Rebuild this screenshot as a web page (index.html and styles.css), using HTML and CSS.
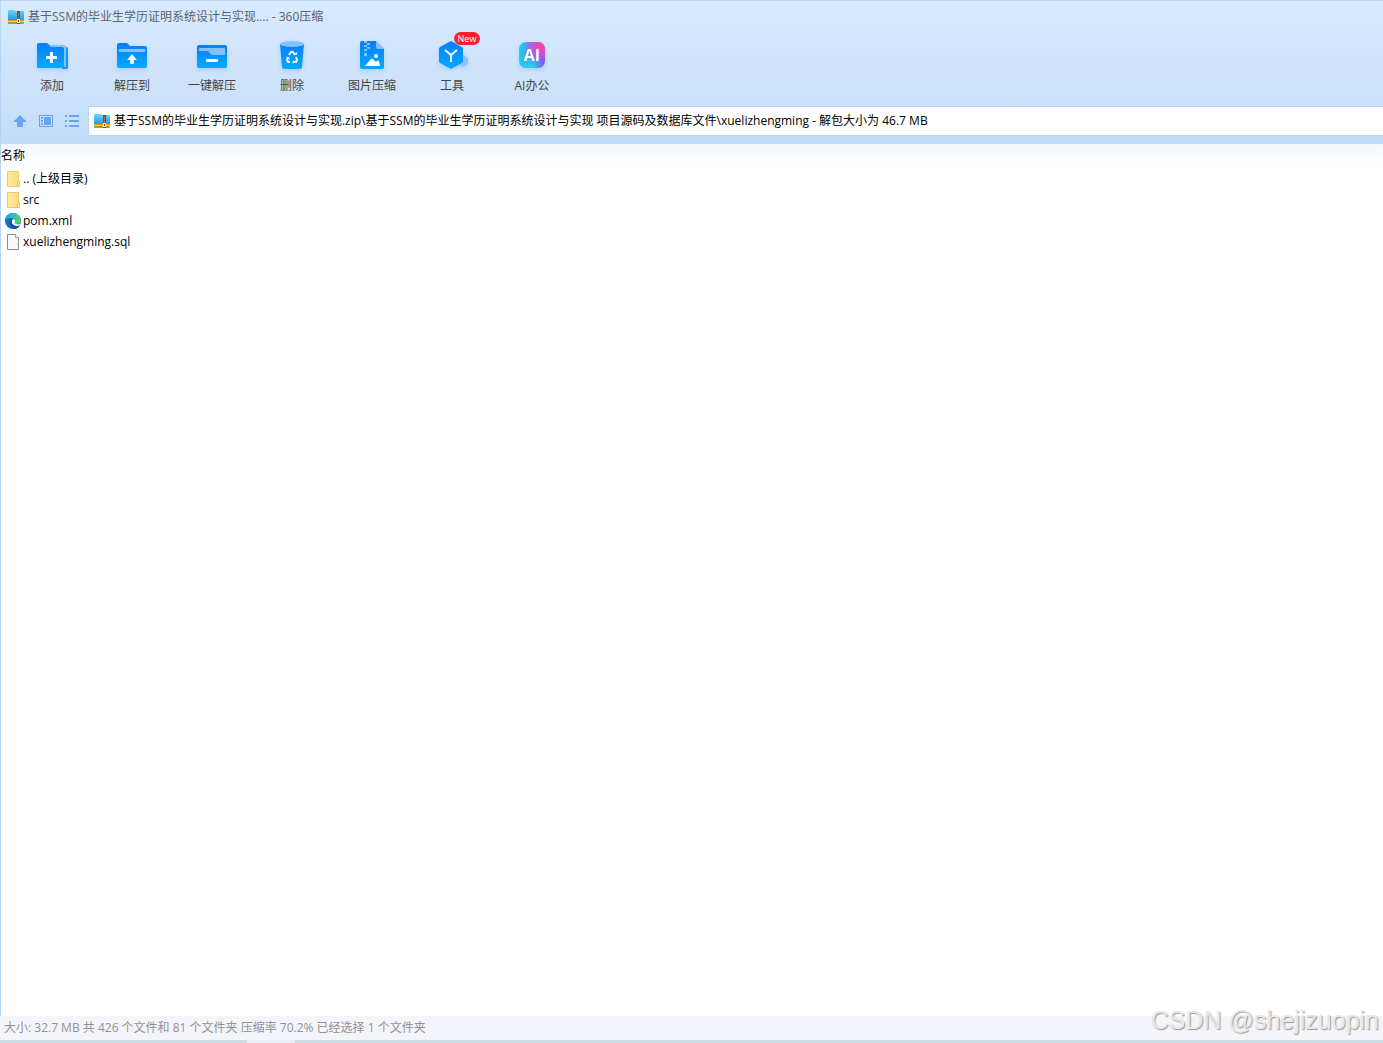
FILE: index.html
```
<!DOCTYPE html>
<html lang="zh-CN">
<head>
    <meta charset="UTF-8">
    <meta name="viewport" content="width=device-width, initial-scale=1.0">
    <title>360压缩</title>
    <link rel="stylesheet" href="styles.css">
</head>
<body>

    <!-- Shared icons and gradients -->
    <svg class="defs" width="0" height="0" aria-hidden="true">
        <defs>
            <linearGradient id="blue" x1="0" y1="0" x2="0" y2="1">
                <stop offset="0" stop-color="#087eff"/>
                <stop offset="1" stop-color="#00aaff"/>
            </linearGradient>
            <linearGradient id="zipBlue" x1="0" y1="0" x2="0" y2="1">
                <stop offset="0" stop-color="#69d5fb"/>
                <stop offset="1" stop-color="#2598ee"/>
            </linearGradient>
            <linearGradient id="folderYellow" x1="0" y1="0" x2="1" y2="0">
                <stop offset="0" stop-color="#ffe9a0"/>
                <stop offset="1" stop-color="#fbdc80"/>
            </linearGradient>
            <linearGradient id="edgeGreen" x1="0" y1="0" x2="1" y2="0">
                <stop offset="0" stop-color="#1f9fdc"/>
                <stop offset="0.5" stop-color="#2dbfc8"/>
                <stop offset="1" stop-color="#62d548"/>
            </linearGradient>
            <linearGradient id="aiBase" x1="0" y1="0" x2="1" y2="0">
                <stop offset="0" stop-color="#10d9ef"/>
                <stop offset="0.45" stop-color="#6a83f5"/>
                <stop offset="1" stop-color="#7a55f4"/>
            </linearGradient>
            <radialGradient id="aiPink" cx="0.85" cy="0.15" r="0.65">
                <stop offset="0" stop-color="#ff3f9e"/>
                <stop offset="0.5" stop-color="#e04bdc" stop-opacity="0.8"/>
                <stop offset="1" stop-color="#a45af0" stop-opacity="0"/>
            </radialGradient>
            <radialGradient id="aiCyan" cx="0.45" cy="1" r="0.55">
                <stop offset="0" stop-color="#19e0f0"/>
                <stop offset="1" stop-color="#20c4f4" stop-opacity="0"/>
            </radialGradient>
            <symbol id="zip" viewBox="0 0 16 14">
                <path d="M0 1q0-1 1-1h5l2 1h7q1 0 1 1v8H0z" fill="url(#zipBlue)"/>
                <path d="M0 10h16v2H0z" fill="#ff8f14"/>
                <path d="M0 11h16v1H0z" fill="#fbd045"/>
                <path d="M0 12h16v1q0 1-1 1H1q-1 0-1-1z" fill="#7fb52d"/>
                <path d="M9 1h3v13H9z" fill="#8f4a1c"/>
                <path d="M10 3h1v1h-1zM10 5h1v1h-1zM10 7h1v1h-1z" fill="#c98a4a"/>
                <path d="M9 9h3v4H9z" fill="#ffe9b0"/>
                <path d="M10 10h1v2h-1z" fill="#7c3a18"/>
            </symbol>
            <symbol id="folder" viewBox="0 0 16 16">
                <path d="M2.500.5h11v10h1v5h-12z" fill="url(#folderYellow)" stroke="#ebcb6c"/>
                <path d="M12.500 15.500v-4l1-1h1v5z" fill="#ffe9a0" stroke="#e6c460"/>
            </symbol>
        </defs>
    </svg>

    <div class="window">
        <header class="top">
            <div class="title-bar">
                <svg class="zip-icon"><use href="#zip"/></svg>
                <span>基于SSM的毕业生学历证明系统设计与实现.... - 360压缩</span>
            </div>

            <nav class="toolbar">
                <button class="tool" type="button">
                    <svg class="tool-icon" viewBox="0 0 32 32">
                        <path d="M28 7h2q2 0 2 2v19q0 1-1 1h-5z" fill="#1692ff"/>
                        <path d="M1 5q0-2 2-2h8l3 2h14q2 0 2 2v20H2q-1 0-1-1z" fill="#83c2ff"/>
                        <path d="M1 5q0-2 2-2h8l4 4h11q2 0 2 2v19H2q-1 0-1-1z" fill="url(#blue)"/>
                        <path d="M14 12h3v4h4v3h-4v4h-3v-4h-4v-3h4z" fill="#effaff"/>
                    </svg>
                    <span>添加</span>
                </button>
                <button class="tool" type="button">
                    <svg class="tool-icon" viewBox="0 0 32 32">
                        <path d="M1 5q0-2 2-2h8l3 3h15q2 0 2 2v18q0 2-2 2H3q-2 0-2-2z" fill="url(#blue)"/>
                        <path d="M3 9h26v3H3z" fill="#83c2ff"/>
                        <path d="M16 14l5 6h-3v4h-4v-4h-3z" fill="#effaff"/>
                    </svg>
                    <span>解压到</span>
                </button>
                <button class="tool" type="button">
                    <svg class="tool-icon" viewBox="0 0 32 32">
                        <rect x="1" y="5" width="30" height="23" rx="2" fill="url(#blue)"/>
                        <path d="M3 9q0-1 1-1h24q1 0 1 1v6H16l-3-3q-1-1-2-1H3z" fill="#83c2ff"/>
                        <rect x="10" y="19" width="12" height="3" rx="1" fill="#fff"/>
                    </svg>
                    <span>一键解压</span>
                </button>
                <button class="tool" type="button">
                    <svg class="tool-icon" viewBox="0 0 32 32">
                        <path d="M4 4h24l-2 23q0 2-3 2H9q-3 0-3-2z" fill="url(#blue)"/>
                        <ellipse cx="16" cy="4" rx="12" ry="3" fill="#83c2ff"/>
                        <g fill="none" stroke="#effaff" stroke-width="2">
                            <path d="M13 15l2-3h2l2 3"/>
                            <path d="M20 17l1 3-1 2h-3"/>
                            <path d="M14 22h-2l-1-2 1-3"/>
                        </g>
                        <path d="M17 15h4v-3zM18 20v4l-2-2zM10 17h3l1 3z" fill="#effaff"/>
                    </svg>
                    <span>删除</span>
                </button>
                <button class="tool" type="button">
                    <svg class="tool-icon" viewBox="0 0 32 32">
                        <path d="M4 3q0-2 2-2h14l8 8v18q0 2-2 2H6q-2 0-2-2z" fill="url(#blue)"/>
                        <path d="M20 1l8 8h-6q-2 0-2-2z" fill="#83c2ff"/>
                        <path d="M8 1h3v2H8zM11 3h3v2h-3zM8 5h3v2H8zM11 7h3v2h-3zM8 9h3v2H8zM8 13h3v3H8z" fill="#83c2ff"/>
                        <path d="M9 26l6-7q1-1 2 0l3 3 1-1q1-1 2 0l1 5z" fill="#fff"/>
                        <circle cx="20" cy="16" r="2" fill="#fff"/>
                    </svg>
                    <span>图片压缩</span>
                </button>
                <button class="tool" type="button">
                    <svg class="tool-icon" viewBox="0 0 32 32">
                        <path d="M26 14l6 4v6l-5 3-6-3z" fill="#8ac5ff"/>
                        <path d="M15 1l11 6q1 1 1 2v12q0 1-1 2l-11 6L4 23q-1-1-1-2V9q0-1 1-2z" fill="url(#blue)"/>
                        <path d="M9 10l6 5 6-5M15 15v7" fill="none" stroke="#effaff" stroke-width="2"/>
                    </svg>
                    <span>工具</span>
                    <span class="badge">New</span>
                </button>
                <button class="tool" type="button">
                    <svg class="tool-icon" viewBox="0 0 32 32">
                        <rect x="3" y="2" width="26" height="26" rx="7" fill="url(#aiBase)"/>
                        <rect x="3" y="2" width="26" height="26" rx="7" fill="url(#aiPink)"/>
                        <rect x="3" y="2" width="26" height="26" rx="7" fill="url(#aiCyan)"/>
                        <text class="ai-text" x="16" y="21" text-anchor="middle">AI</text>
                    </svg>
                    <span>AI办公</span>
                </button>
            </nav>

            <div class="address-row">
                <button class="nav-btn" type="button" aria-label="上级目录">
                    <svg viewBox="0 0 16 16"><path d="M8 2l7 7h-4v5H5V9H1z"/></svg>
                </button>
                <button class="nav-btn" type="button" aria-label="预览">
                    <svg viewBox="0 0 16 16">
                        <path d="M1 2h14v12H1zM2 3v10h12V3z" fill-rule="evenodd"/>
                        <path d="M3 4h2v2H3zM3 7h2v2H3zM3 10h2v2H3zM6 4h7v8H6z"/>
                    </svg>
                </button>
                <button class="nav-btn" type="button" aria-label="列表">
                    <svg viewBox="0 0 16 16"><path d="M1 2h2v2H1zM5 2h10v2H5zM1 7h2v2H1zM5 7h10v2H5zM1 12h2v2H1zM5 12h10v2H5z"/></svg>
                </button>
                <label class="address">
                    <svg class="zip-icon"><use href="#zip"/></svg>
                    <input type="text" aria-label="地址" value="基于SSM的毕业生学历证明系统设计与实现.zip\基于SSM的毕业生学历证明系统设计与实现 项目源码及数据库文件\xuelizhengming - 解包大小为 46.7 MB">
                </label>
            </div>
        </header>

        <main class="files">
            <table>
                <thead>
                    <tr><th>名称</th></tr>
                </thead>
                <tbody>
                    <tr>
                        <td><div class="file"><svg viewBox="0 0 16 16"><use href="#folder"/></svg>.. (上级目录)</div></td>
                    </tr>
                    <tr>
                        <td><div class="file"><svg viewBox="0 0 16 16"><use href="#folder"/></svg>src</div></td>
                    </tr>
                    <tr>
                        <td><div class="file">
                            <svg viewBox="0 0 16 16">
                                <circle cx="8" cy="8" r="8" fill="#1273c6"/>
                                <path d="M0 7C1 2 4 0 8 0c5 0 8 4 8 7 0 3-2 4-4 4-2 0-3-1-2-2 1-3-1-4-4-4-3 0-5 1-6 2z" fill="url(#edgeGreen)"/>
                                <path d="M5 7c-2 4 1 8 5 9 2 0 4-2 5-4-4 2-8 0-8-3 0-1 0-2 1-3-1 0-2 0-3 1z" fill="#12509f"/>
                                <path d="M8 6c-3 3 0 7 4 7 2 0 3-1 3-2-1 0-2 1-3 0-2 0-3-1-2-2 1-2-1-3-2-3z" fill="#fff"/>
                            </svg>pom.xml</div></td>
                    </tr>
                    <tr>
                        <td><div class="file">
                            <svg viewBox="0 0 16 16">
                                <path d="M2.500.5h8l3 3v12h-11z" fill="#f9f9f9" stroke="#8b8b8b"/>
                                <path d="M10.500.5v3h3" fill="#fff" stroke="#a5a5a5"/>
                            </svg>xuelizhengming.sql</div></td>
                    </tr>
                </tbody>
            </table>
        </main>

        <footer class="status">
            <span>大小: 32.7 MB 共 426 个文件和 81 个文件夹 压缩率 70.2% 已经选择 1 个文件夹</span>
            <span class="watermark">CSDN @shejizuopin</span>
        </footer>
        <div class="taskbar"><span class="taskbar-item"></span></div>
    </div>

</body>
</html>
```

FILE: styles.css
```
* {
    box-sizing: border-box;
}
body {
    margin: 0;
    background-color: #ffffff;
    color: #000000;
    font-family: "Open Sans", "Noto Sans CJK SC", sans-serif;
    font-size: 12px;
    line-height: 20px;
}
button, input {
    font: inherit;
    color: inherit;
    border: none;
    background: none;
    padding: 0;
}
.defs {
    position: absolute;
}
.window {
    display: flex;
    flex-direction: column;
    min-height: 100vh;
}
.top {
    height: 144px;
    border-top: 1px solid #b9d6f3;
    border-left: 1px solid #b5d3f4;
    background: linear-gradient(#d7eaff, #cbe1f9 70%, #c2dcf8);
}
.title-bar {
    display: flex;
    align-items: center;
    gap: 4px;
    height: 31px;
    padding-left: 7px;
    color: #5c6369;
}
.zip-icon {
    flex: none;
    width: 16px;
    height: 14px;
}
.toolbar {
    display: flex;
    height: 74px;
    padding-left: 11px;
}
.tool {
    position: relative;
    display: flex;
    flex-direction: column;
    align-items: center;
    gap: 4px;
    width: 80px;
    padding-top: 8px;
    color: #444444;
    cursor: pointer;
}
.tool-icon {
    width: 32px;
    height: 32px;
    filter: drop-shadow(0 2px 2px rgba(40, 130, 230, 0.2));
}
.ai-text {
    fill: #ffffff;
    font-size: 16px;
    font-weight: bold;
}
.badge {
    position: absolute;
    top: 0;
    left: 42px;
    width: 26px;
    height: 13px;
    border-radius: 7px;
    background-color: #f8202c;
    color: #ffffff;
    font-size: 9px;
    line-height: 13px;
    text-align: center;
}
.address-row {
    display: flex;
    align-items: center;
    height: 30px;
    padding-left: 6px;
}
.nav-btn {
    display: flex;
    justify-content: center;
    width: 26px;
    cursor: pointer;
}
.nav-btn svg {
    width: 16px;
    height: 16px;
    fill: #6aa3f0;
}
.address {
    display: flex;
    flex: 1;
    align-items: center;
    gap: 4px;
    height: 30px;
    margin-left: 3px;
    padding-left: 5px;
    border: 1px solid #b9d5f5;
    border-right: none;
    background-color: #ffffff;
}
.address input {
    flex: 1;
    min-width: 0;
    outline: none;
}
.files {
    flex: 1;
    border-left: 1px solid #b5d3f4;
}
.files table {
    width: 100%;
    border-collapse: collapse;
}
.files th {
    height: 24px;
    padding: 0;
    background: linear-gradient(#f2f8ff, #ffffff);
    font-weight: normal;
    text-align: left;
}
.files td {
    height: 21px;
    padding: 0 0 0 4px;
}
.file {
    display: flex;
    align-items: center;
    gap: 2px;
}
.file svg {
    flex: none;
    width: 16px;
    height: 16px;
}
.status {
    position: relative;
    height: 24px;
    padding-left: 4px;
    background-color: #f3f5fa;
    color: #929292;
    line-height: 24px;
}
.watermark {
    position: absolute;
    right: 4px;
    bottom: 4px;
    color: #e8e8ea;
    font-family: "Liberation Sans", Arial, sans-serif;
    font-size: 25px;
    line-height: 32px;
    text-shadow: 1px 1px 1px #999999;
}
.taskbar {
    height: 3px;
    padding-left: 247px;
    background-color: #cddee3;
}
.taskbar-item {
    display: block;
    width: 48px;
    height: 3px;
    background-color: #e9f0f3;
}
```
